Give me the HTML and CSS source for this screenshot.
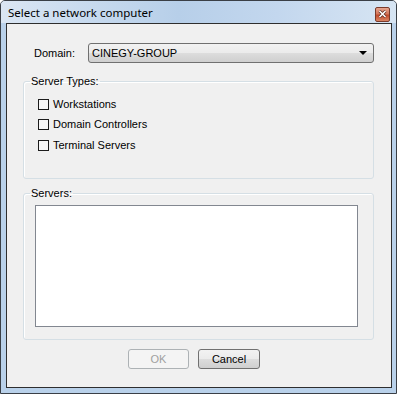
FILE: index.html
```html
<!DOCTYPE html>
<html>

<head lang="en">
  <meta charset="UTF-8">
  <title>Select a network computer</title>
  <link rel="stylesheet" href="styles.css">
</head>

<body>
  <div class="window">
    <div class="titlebar">
      <span class="title">Select a network computer</span>
      <span class="close">
        <svg width="9" height="8" viewBox="0 0 9 8">
          <path d="M1.5 1 L7.5 7 M7.5 1 L1.5 7" stroke="#5a2a20" stroke-width="3" />
          <path d="M1.5 1 L7.5 7 M7.5 1 L1.5 7" stroke="#fff" stroke-width="1.6" />
        </svg>
      </span>
    </div>
    <div class="client">
      <div class="domain-row">
        <span class="domain-label">Domain:</span>
        <div class="combo">
          <span>CINEGY-GROUP</span>
          <span class="arrow"></span>
        </div>
      </div>

      <fieldset class="group types">
        <legend>Server Types:</legend>
        <label class="check"><span class="box"></span>Workstations</label>
        <label class="check"><span class="box"></span>Domain Controllers</label>
        <label class="check third"><span class="box"></span>Terminal Servers</label>
      </fieldset>

      <fieldset class="group servers">
        <legend>Servers:</legend>
        <div class="list"></div>
      </fieldset>

      <div class="buttons">
        <button class="btn ok" disabled>OK</button>
        <button class="btn cancel">Cancel</button>
      </div>
    </div>
  </div>
</body>

</html>
```

FILE: styles.css
```css
* {
  margin: 0;
  padding: 0;
  box-sizing: border-box;
}

body {
  background: #fff;
  font-family: "Liberation Sans", Arial, sans-serif;
  font-size: 11px;
  color: #000;
}

.window {
  width: 397px;
  height: 394px;
  border: 1px solid #3a3f46;
  border-radius: 5px 5px 0 0;
  background: #b9d1ea;
  padding: 0 4px 5px 5px;
  display: flex;
  flex-direction: column;
}

.titlebar {
  height: 22px;
  margin: 0 -4px 0 -5px;
  padding: 0 6px 0 7px;
  display: flex;
  align-items: center;
  justify-content: space-between;
  border-radius: 4px 4px 0 0;
  background: linear-gradient(to right, #dbe6f3 0%, #c9dbef 20%, #b7cfe9 45%, #c3d7ee 70%, #d7e5f3 100%);
}

.title {
  font-family: "Noto Sans", "Open Sans", sans-serif;
  font-size: 11.5px;
  color: #000;
  padding-top: 1px;
}

.close {
  width: 15px;
  height: 15px;
  margin-top: 4px;
  border: 1px solid #7a3a2a;
  border-radius: 2px;
  background: linear-gradient(#e6a58f 0%, #d3755a 45%, #c14a2c 55%, #d98463 100%);
  display: flex;
  align-items: center;
  justify-content: center;
}

.client {
  flex: 1;
  border: 1px solid #2e2e2e;
  background: #f0f0f0;
  padding-top: 19px;
  display: flex;
  flex-direction: column;
}

.domain-row {
  display: flex;
  align-items: center;
  height: 20px;
}

.domain-label {
  width: 81px;
  padding-left: 27px;
}

.combo {
  width: 286px;
  height: 20px;
  border: 1px solid #707070;
  border-radius: 3px;
  background: linear-gradient(#f2f2f2 0%, #ebebeb 50%, #dddddd 51%, #cfcfcf 100%);
  display: flex;
  align-items: center;
  justify-content: space-between;
  padding: 0 6px 0 3px;
}

.arrow {
  width: 0;
  height: 0;
  border-left: 4px solid transparent;
  border-right: 4px solid transparent;
  border-top: 4px solid #000;
}

.group {
  margin: 0 17px 0 16px;
  border: 1px solid #d5dfe5;
  border-radius: 3px;
  box-shadow: inset 1px 1px 0 #fff;
}

.group legend {
  padding: 0 1px;
  line-height: 13px;
}

.types {
  margin-top: 12px;
  height: 104px;
  padding: 6px 0 0 14px;
}

.types legend {
  margin-left: -8px;
}

.check {
  display: flex;
  align-items: center;
  height: 20px;
  gap: 4px;
}

.check.third {
  margin-top: 1px;
}

.box {
  width: 11px;
  height: 11px;
  border: 1px solid #1c1c1c;
  background: #f8f8f8;
}

.servers {
  margin-top: 8px;
  height: 153px;
  padding: 5px 0 0 11px;
}

.servers legend {
  margin-left: -5px;
}

.list {
  width: 323px;
  height: 122px;
  border: 1px solid #828790;
  background: #fff;
}

.buttons {
  display: flex;
  gap: 9px;
  padding-left: 121px;
  margin-top: 9px;
}

.btn {
  height: 20px;
  font-family: "Liberation Sans", Arial, sans-serif;
  font-size: 11px;
  border-radius: 3px;
}

.ok {
  width: 61px;
  border: 1px solid #adb2b5;
  background: #f4f4f4;
  color: #a0a0a0;
}

.cancel {
  width: 62px;
  border: 1px solid #707070;
  background: linear-gradient(#f2f2f2 0%, #ebebeb 50%, #dddddd 51%, #cfcfcf 100%);
  color: #000;
}
```
